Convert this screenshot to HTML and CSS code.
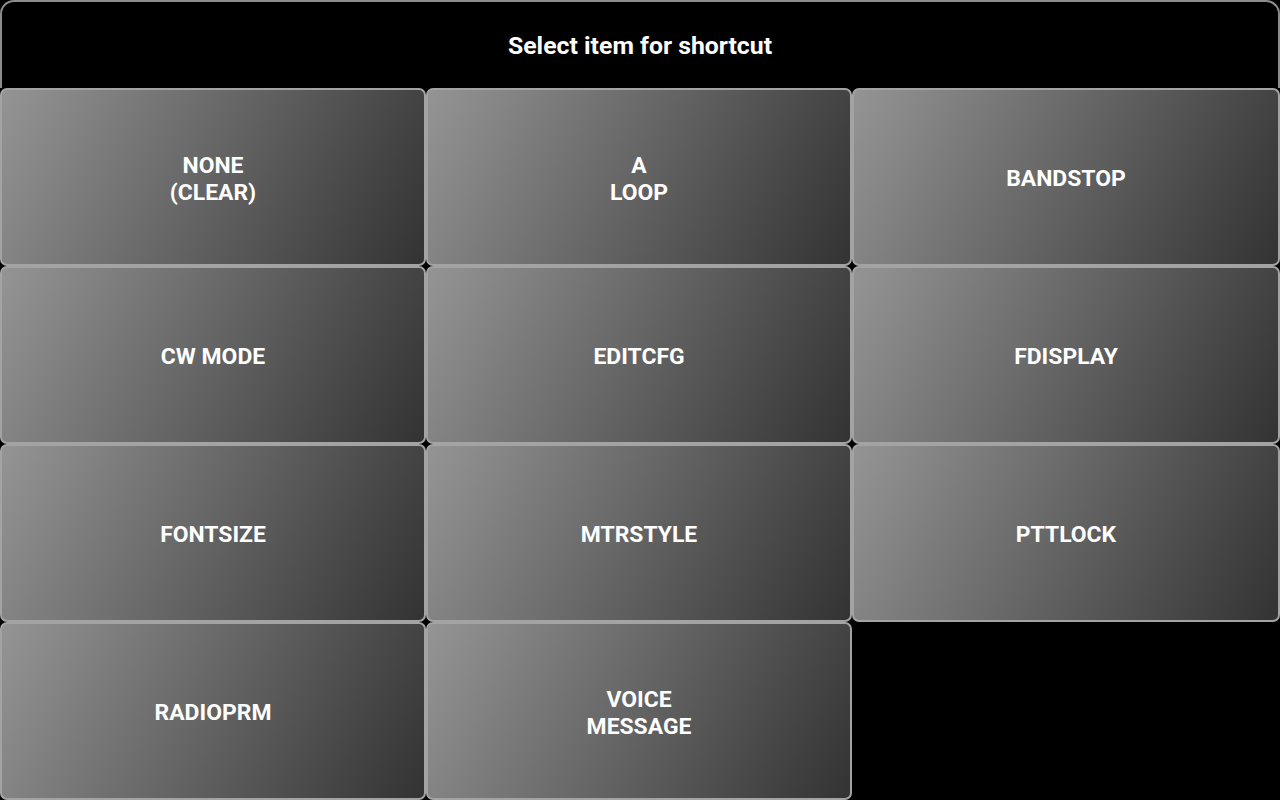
FILE: index.html
```html
<!DOCTYPE html>
<html>
<head>
<meta charset="utf-8">
<link rel="stylesheet" href="styles.css">
</head>
<body>
<div class="screen">
  <header class="title">Select item for shortcut</header>
  <main class="grid">
    <button class="item">NONE<br>(CLEAR)</button>
    <button class="item">A<br>LOOP</button>
    <button class="item">BANDSTOP</button>
    <button class="item">CW MODE</button>
    <button class="item">EDITCFG</button>
    <button class="item">FDISPLAY</button>
    <button class="item">FONTSIZE</button>
    <button class="item">MTRSTYLE</button>
    <button class="item">PTTLOCK</button>
    <button class="item">RADIOPRM</button>
    <button class="item">VOICE<br>MESSAGE</button>
  </main>
</div>
</body>
</html>
```

FILE: styles.css
```css
html, body {
  margin: 0;
  padding: 0;
  background: #000;
}
body {
  width: 1280px;
  height: 800px;
  overflow: hidden;
  font-family: Roboto, "Liberation Sans", sans-serif;
}
.screen {
  width: 1280px;
  height: 800px;
  display: flex;
  flex-direction: column;
  background: #000;
}
.title {
  height: 88px;
  box-sizing: border-box;
  border: 2px solid #8c8c8c;
  border-bottom: none;
  border-radius: 14px 14px 0 0;
  display: flex;
  align-items: center;
  justify-content: center;
  color: #fff;
  font-weight: 700;
  font-size: 24.8px;
  padding-top: 1px;
}
.grid {
  flex: 1;
  display: grid;
  grid-template-columns: 426px 426px 428px;
  grid-template-rows: repeat(4, 178px);
}
.item {
  margin: 0;
  box-sizing: border-box;
  border: 2px solid #a3a3a3;
  border-radius: 7px;
  background: linear-gradient(116deg, #949494 0%, #333333 100%);
  color: #fff;
  font-family: Roboto, "Liberation Sans", sans-serif;
  font-weight: 700;
  font-size: 22.9px;
  line-height: 27px;
  text-align: center;
  padding: 3px 0 0 0;
}
```
